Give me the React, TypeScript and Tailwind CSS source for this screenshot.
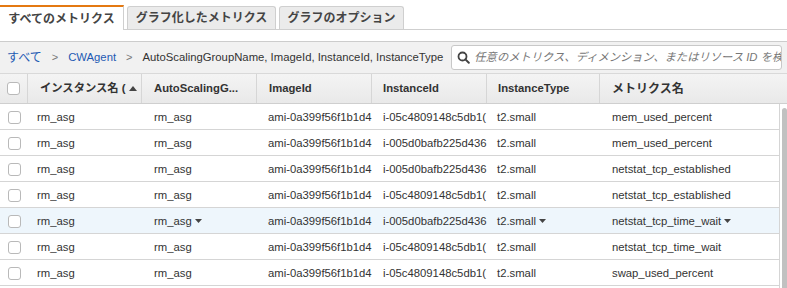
import React from "react";

const rows = [
  { img: "ami-0a399f56f1b1d4", inst: "i-05c4809148c5db1(", metric: "mem_used_percent" },
  { img: "ami-0a399f56f1b1d4", inst: "i-005d0bafb225d436", metric: "mem_used_percent" },
  { img: "ami-0a399f56f1b1d4", inst: "i-005d0bafb225d436", metric: "netstat_tcp_established" },
  { img: "ami-0a399f56f1b1d4", inst: "i-05c4809148c5db1(", metric: "netstat_tcp_established" },
  { img: "ami-0a399f56f1b1d4", inst: "i-005d0bafb225d436", metric: "netstat_tcp_time_wait", hl: true },
  { img: "ami-0a399f56f1b1d4", inst: "i-05c4809148c5db1(", metric: "netstat_tcp_time_wait" },
  { img: "ami-0a399f56f1b1d4", inst: "i-05c4809148c5db1(", metric: "swap_used_percent" },
];

const Caret = () => (
  <svg width="7" height="4" viewBox="0 0 7 4" className="ml-[3px] inline-block">
    <path d="M0 0 L7 0 L3.5 4 Z" fill="#444" />
  </svg>
);

const Checkbox = () => (
  <div className="w-[13px] h-[13px] rounded-[3px] border border-[#b9b9b9] bg-white" />
);

export default function App() {
  const font = { fontFamily: '"Liberation Sans", Arial, "Noto Sans CJK JP", sans-serif' };
  return (
    <div className="w-[787px] h-[288px] bg-white overflow-hidden text-[11.3px] text-[#333]" style={font}>
      {/* Tabs */}
      <div className="flex items-end h-[30px] pt-[5px] border-b border-[#cfcfcf] text-[12px]">
        <div className="w-[124px] h-[25px] -mb-px bg-white border-t-2 border-[#e47911] border-r border-r-[#cfcfcf] flex items-center justify-center font-bold text-[#444]">
          すべてのメトリクス
        </div>
        <div className="ml-[3px] w-[149px] h-[23px] bg-[#ebebeb] border border-[#cfcfcf] rounded-t-[3px] border-b-0 flex items-center justify-center font-bold text-[#444]">
          グラフ化したメトリクス
        </div>
        <div className="ml-[3px] w-[125px] h-[23px] bg-[#ebebeb] border border-[#cfcfcf] rounded-t-[3px] border-b-0 flex items-center justify-center font-bold text-[#444]">
          グラフのオプション
        </div>
      </div>
      <div className="h-[11px]" />
      {/* Breadcrumb bar */}
      <div className="h-[33px] bg-[#f1f1f1] border-t border-[#cccccc] border-b border-b-[#d9d9d9] flex items-center pl-[7px] pr-[5px]">
        <span className="text-[#1d5ab3] text-[12px]">すべて</span>
        <span className="mx-[10px] text-[#777] text-[11px]">&gt;</span>
        <span className="text-[#1d5ab3]">CWAgent</span>
        <span className="mx-[10px] text-[#777] text-[11px]">&gt;</span>
        <span className="text-[#333] whitespace-nowrap">AutoScalingGroupName, ImageId, InstanceId, InstanceType</span>
        <div className="ml-[8px] flex-1 min-w-0 h-[25px] bg-white border border-[#c8c8c8] rounded-[3px] flex items-center pl-[5px] overflow-hidden">
          <svg width="13" height="13" viewBox="0 0 13 13" className="shrink-0">
            <circle cx="5.5" cy="5.5" r="4" stroke="#444" strokeWidth="1.8" fill="none" />
            <path d="M8.4 8.4 L11.8 11.8" stroke="#444" strokeWidth="2" strokeLinecap="round" />
          </svg>
          <span className="ml-[4px] italic text-[#777] whitespace-nowrap text-[11.3px]">
            任意のメトリクス、ディメンション、またはリソース ID を検索
          </span>
        </div>
      </div>
      {/* Header */}
      <div className="flex h-[30px] bg-gradient-to-b from-[#f4f4f4] to-[#e9e9e9] border-b border-[#cfcfcf] font-bold text-[#333]">
        <div className="w-[28px] flex items-center justify-center border-r border-[#d6d6d6]"><Checkbox /></div>
        <div className="w-[114px] flex items-center pl-[12px] border-r border-[#d6d6d6] whitespace-nowrap overflow-hidden">
          インスタンス名 (
          <svg width="8" height="5" viewBox="0 0 8 5" className="ml-[3px]"><path d="M0 5 L8 5 L4 0 Z" fill="#444" /></svg>
        </div>
        <div className="w-[115px] flex items-center pl-[12px] border-r border-[#d6d6d6] whitespace-nowrap overflow-hidden">AutoScalingG...</div>
        <div className="w-[115px] flex items-center pl-[12px] border-r border-[#d6d6d6]">ImageId</div>
        <div className="w-[115px] flex items-center pl-[11px] border-r border-[#d6d6d6]">InstanceId</div>
        <div className="w-[113px] flex items-center pl-[11px] border-r border-[#d6d6d6]">InstanceType</div>
        <div className="flex-1 flex items-center pl-[12px] text-[12px]">メトリクス名</div>
      </div>
      {/* Body */}
      <div className="flex">
        <div className="w-[779px]">
          {rows.map((r, i) => (
            <div key={i} className={`flex h-[26px] pt-[1px] border-b border-[#d5d5d5] ${r.hl ? "bg-[#eef6fc]" : "bg-white"}`}>
              <div className="w-[28px] flex items-center justify-center"><Checkbox /></div>
              <div className="w-[114px] flex items-center pl-[9px]">rm_asg</div>
              <div className="w-[115px] flex items-center pl-[12px]">rm_asg{r.hl && <Caret />}</div>
              <div className="w-[115px] flex items-center pl-[11px] overflow-hidden whitespace-nowrap">{r.img}</div>
              <div className="w-[115px] flex items-center pl-[11px] overflow-hidden whitespace-nowrap">{r.inst}</div>
              <div className="w-[113px] flex items-center pl-[10px]">t2.small{r.hl && <Caret />}</div>
              <div className="flex-1 flex items-center pl-[12px] whitespace-nowrap">{r.metric}{r.hl && <Caret />}</div>
            </div>
          ))}
        </div>
        <div className="flex-1 border-l border-[#d5d5d5] pt-[4px] pl-[2px]">
          <div className="h-[200px] bg-[#c1c1c1] rounded-t-[4px]" />
        </div>
      </div>
    </div>
  );
}
